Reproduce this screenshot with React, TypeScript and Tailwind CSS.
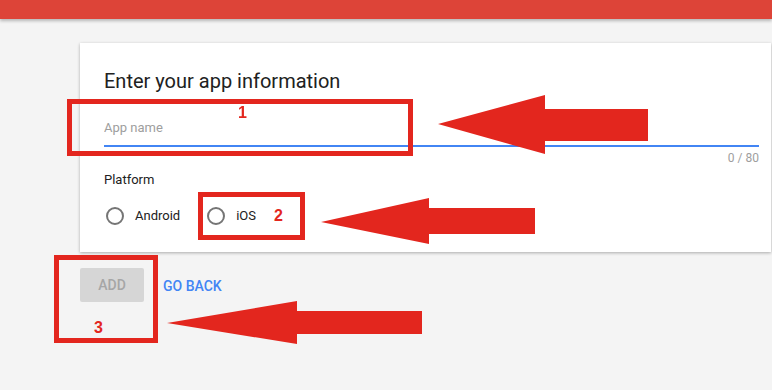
import { useState } from "react";

// red call-outs drawn over the form (arrows), coordinates of the page
const arrows = [
    { tip: [438, 124], head: 545, top: 95, bottom: 154, shaftTop: 109, shaftBottom: 141, end: 648 },
    { tip: [321, 222], head: 429, top: 198, bottom: 244, shaftTop: 208, shaftBottom: 234, end: 535 },
    { tip: [167, 323], head: 297, top: 301, bottom: 344, shaftTop: 311, shaftBottom: 334, end: 422 },
];

const Radio = ({ label, checked, onClick }: { label: string; checked: boolean; onClick: () => void }) => (
    <button type="button" onClick={onClick} className="flex items-center gap-[11px] cursor-pointer">
        <span className="w-[18px] h-[18px] rounded-full border-2 border-[#757575] flex items-center justify-center">
            {checked && <span className="w-[8px] h-[8px] rounded-full bg-[#4285f4]" />}
        </span>
        <span className="text-[13px] text-[#212121]">{label}</span>
    </button>
);

const App = () => {
    const [name, setName] = useState("");
    const [platform, setPlatform] = useState<string | null>(null);

    return (
        <div className="relative w-[772px] h-[390px] overflow-hidden bg-[#f4f4f4]" style={{ fontFamily: "Roboto, 'Noto Sans', sans-serif" }}>
            <header className="h-[19px] bg-[#dd4438] shadow-[0_2px_3px_rgba(0,0,0,0.25)]" />

            <main className="pl-[80px] pt-[24px]">
                <section className="w-[691px] bg-white pl-[24px] pr-[12px] pt-[26px] pb-[18px] shadow-[0_1px_3px_rgba(0,0,0,0.3)]">
                    <h2 className="text-[20px] leading-[24px] text-[#212121]">Enter your app information</h2>

                    <input
                        autoFocus
                        value={name}
                        maxLength={80}
                        onChange={(e) => setName(e.target.value)}
                        placeholder="App name"
                        className="block w-full h-[34px] mt-[20px] pb-[4px] text-[13px] text-[#212121] placeholder:text-[#9e9e9e] border-b-2 border-[#4285f4] outline-none caret-black"
                    />
                    <div className="mt-[3px] text-right text-[12px] leading-[16px] text-[#9e9e9e]">{name.length} / 80</div>

                    <div className="mt-[6px] text-[13px] leading-[16px] text-[#212121]">Platform</div>
                    <div className="mt-[10px] h-[36px] flex items-center gap-[27px] pl-[2px]">
                        <Radio label="Android" checked={platform === "android"} onClick={() => setPlatform("android")} />
                        <Radio label="iOS" checked={platform === "ios"} onClick={() => setPlatform("ios")} />
                    </div>
                </section>

                <div className="mt-[16px] flex items-center gap-[19px]">
                    <button
                        disabled
                        className="w-[64px] h-[34px] rounded-[2px] bg-[#d6d6d6] text-[14px] font-medium text-[#a6a6a6]"
                    >
                        ADD
                    </button>
                    <button className="pt-[2px] text-[14px] font-medium text-[#4285f4] cursor-pointer">GO BACK</button>
                </div>
            </main>

            {/* annotation boxes and numbers */}
            <div className="absolute left-[67px] top-[99px] w-[346px] h-[57px] border-[5px] border-[#e3261e]" />
            <div className="absolute left-[198px] top-[192px] w-[107px] h-[48px] border-[5px] border-[#e3261e]" />
            <div className="absolute left-[54px] top-[255px] w-[104px] h-[88px] border-[5px] border-[#e3261e]" />

            <span className="absolute left-[238px] top-[103px] text-[16px] font-bold leading-[20px] text-[#e3261e]" style={{ fontFamily: "'Liberation Sans', Arial, sans-serif" }}>1</span>
            <span className="absolute left-[274px] top-[206px] text-[16px] font-bold leading-[20px] text-[#e3261e]" style={{ fontFamily: "'Liberation Sans', Arial, sans-serif" }}>2</span>
            <span className="absolute left-[94px] top-[318px] text-[16px] font-bold leading-[20px] text-[#e3261e]" style={{ fontFamily: "'Liberation Sans', Arial, sans-serif" }}>3</span>

            <svg className="absolute inset-0 pointer-events-none" width={772} height={390}>
                {arrows.map((a, i) => (
                    <polygon
                        key={i}
                        fill="#e3261e"
                        points={`${a.tip[0]},${a.tip[1]} ${a.head},${a.top} ${a.head},${a.shaftTop} ${a.end},${a.shaftTop} ${a.end},${a.shaftBottom} ${a.head},${a.shaftBottom} ${a.head},${a.bottom}`}
                    />
                ))}
            </svg>
        </div>
    );
};

export default App;
